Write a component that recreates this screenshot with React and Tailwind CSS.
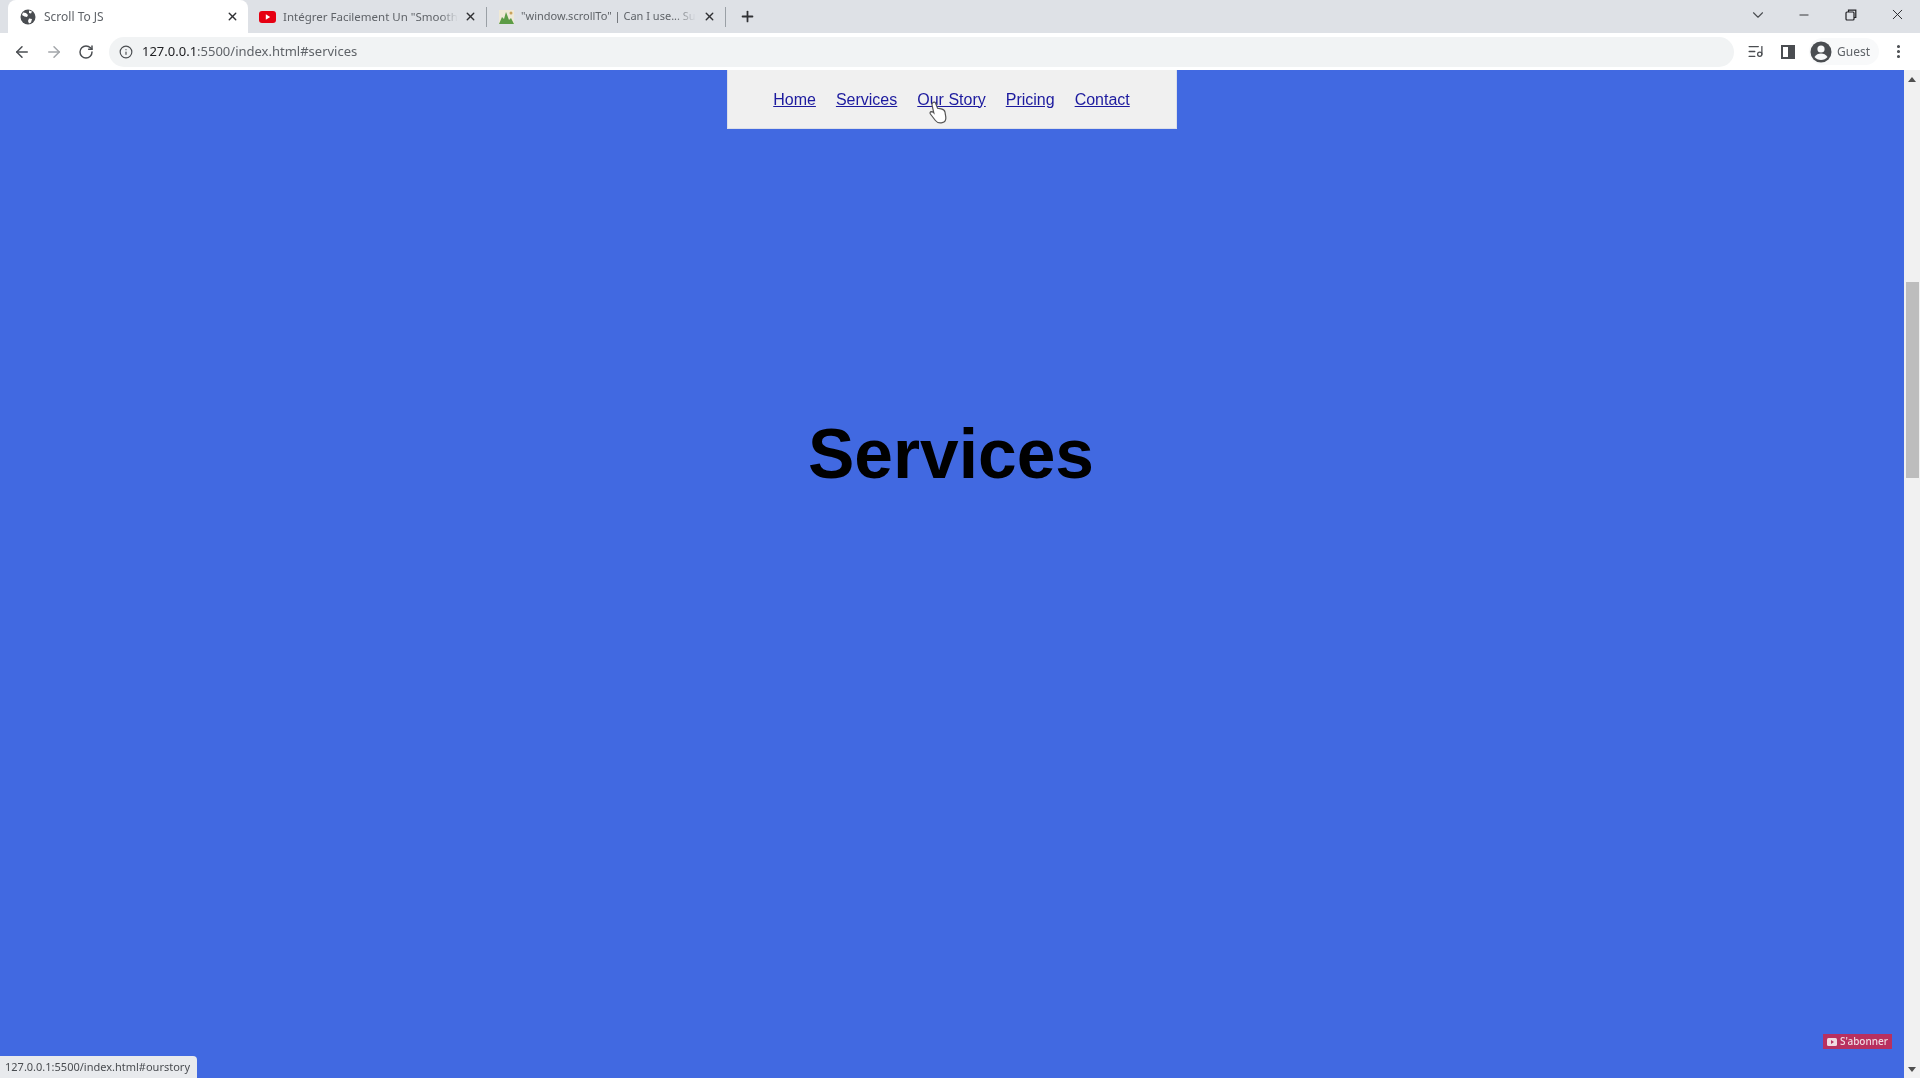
import { ArrowLeft, ArrowRight, RotateCw, Info, X, Plus, ChevronDown, Minus, EllipsisVertical, ListMusic } from "lucide-react";

const links = ["Home", "Services", "Our Story", "Pricing", "Contact"];

const GlobeIcon = () => (
  <svg width="16" height="16" viewBox="0 0 16 16" className="shrink-0">
    <circle cx="8" cy="8" r="7.5" fill="#4a4d51" />
    <path d="M3 3.5l3 .5 2 2-1 2-2.5-.5L2 6zM9 9.5l3 .5-1 3.5-2 1-1-2.5zM9 1.5l3 1-1 2-2-.5z" fill="#fff" />
  </svg>
);

const YoutubeIcon = () => (
  <svg width="17" height="12" viewBox="0 0 17 12" className="shrink-0">
    <rect width="17" height="12" rx="3" fill="#e60012" />
    <path d="M6.8 3.2l4.4 2.8-4.4 2.8z" fill="#fff" />
  </svg>
);

const CaniuseIcon = () => (
  <svg width="17" height="16" viewBox="0 0 17 16" className="shrink-0">
    <rect x="1" y="1" width="15" height="14" fill="#efe9d6" />
    <path d="M1 15l3-7 2 2 2-7 3 8 2-2 3 6z" fill="#5c9c46" />
    <circle cx="13" cy="4" r="1.5" fill="#c9a25b" />
  </svg>
);

const Tab = ({ icon, title, active, width, textClass }) => (
  <div
    className={
      active
        ? "flex h-[33px] items-center rounded-t-lg bg-white pl-3 pr-[9px]"
        : "flex h-[33px] items-center pl-[11px] pr-[9px]"
    }
    style={{ width }}
  >
    {icon}
    <span className={textClass}>{title}</span>
    <X size={13} strokeWidth={2.5} className="ml-auto shrink-0 text-[#303134]" />
  </div>
);

export default function App() {
  return (
    <div className="flex h-screen w-full flex-col overflow-hidden bg-white font-['Noto_Sans',sans-serif] blur-[0.4px]">
      {/* tab strip */}
      <div className="flex h-[33px] items-center bg-[#dee1e6] pl-2">
        <Tab
          active
          width={240}
          title="Scroll To JS"
          icon={<GlobeIcon />}
          textClass="ml-2 whitespace-nowrap text-xs text-[#5f6368]"
        />
        <Tab
          width={238}
          title={'Intégrer Facilement Un "Smooth'}
          icon={<YoutubeIcon />}
          textClass="ml-[7px] whitespace-nowrap text-[11.5px] text-[#5f6368] [mask-image:linear-gradient(to_right,black_90%,transparent)]"
        />
        <div className="h-5 w-px bg-[#9aa0a6]" />
        <Tab
          width={238}
          title={'"window.scrollTo" | Can I use... Su'}
          icon={<CaniuseIcon />}
          textClass="ml-[6px] whitespace-nowrap text-[11px] text-[#5f6368] [mask-image:linear-gradient(to_right,black_88%,transparent)]"
        />
        <div className="h-5 w-px bg-[#9aa0a6]" />
        <Plus size={17} strokeWidth={2.5} className="ml-[13px] text-[#303134]" />
        <div className="flex-1" />
        <div className="flex items-center pb-1">
          <ChevronDown size={18} strokeWidth={1.5} className="text-[#4a4d51]" />
          <Minus size={14} strokeWidth={1.5} className="ml-[30px] text-[#202124]" />
          <svg width="12" height="12" viewBox="0 0 12 12" className="ml-[34px]" fill="none" stroke="#202124" strokeWidth="1.2">
            <rect x="1" y="3" width="8" height="8" rx="1" />
            <path d="M3.5 3V1.2h7.3v7.3H9" />
          </svg>
          <X size={17} strokeWidth={1.3} className="ml-[32px] mr-[14px] text-[#202124]" />
        </div>
      </div>

      {/* toolbar */}
      <div className="flex h-[37px] items-center bg-white">
        <ArrowLeft size={18} strokeWidth={2} className="ml-[13px] text-[#4a4d51]" />
        <ArrowRight size={18} strokeWidth={2} className="ml-[14px] text-[#a3a6aa]" />
        <RotateCw size={16} strokeWidth={2.2} className="ml-[15px] text-[#4a4d51]" />
        <div className="ml-[15px] flex h-[30px] flex-1 items-center rounded-full bg-[#f1f3f4] pl-[10px]">
          <Info size={14} strokeWidth={2} className="text-[#4a4d51]" />
          <span className="ml-[9px] text-[13px] text-[#202124]">
            127.0.0.1<span className="text-[#5f6368]">:5500/index.html#services</span>
          </span>
        </div>
        <ListMusic size={17} strokeWidth={1.8} className="ml-[13px] text-[#4a4d51]" />
        <svg width="14" height="14" viewBox="0 0 14 14" className="ml-[17px]">
          <path fillRule="evenodd" d="M0 0h14v14H0zM2 2v10h5V2z" fill="#4a4d51" />
        </svg>
        <div className="ml-[14px] flex h-[27px] w-[70px] items-center rounded-full bg-[#f8f9fa] pl-[1px]">
          <svg width="22" height="22" viewBox="0 0 22 22" className="shrink-0">
            <circle cx="11" cy="11" r="10.5" fill="#4a4d51" />
            <circle cx="11" cy="8" r="3.6" fill="#f8f9fa" />
            <path d="M4.5 16c1.5-2.6 4-3.6 6.5-3.6s5 1 6.5 3.6c-1.6 2-3.9 3-6.5 3s-4.9-1-6.5-3z" fill="#f8f9fa" />
          </svg>
          <span className="ml-[5px] text-xs text-[#5f6368]">Guest</span>
        </div>
        <EllipsisVertical size={17} strokeWidth={2.4} className="ml-[11px] mr-[13px] text-[#4a4d51]" />
      </div>

      {/* page */}
      <div className="flex flex-1">
        <div className="relative flex flex-1 flex-col items-center bg-[#4169e1] font-['Liberation_Sans',sans-serif]">
          <nav className="flex h-[59px] w-[450px] items-center justify-center gap-5 border border-t-0 border-[#dcdfe8] bg-[#f0f0f0] pt-[1px] pr-[1px]">
            {links.map((link) => (
              <a key={link} href="#" className="text-base text-[#1c1a9e] underline">
                {link}
              </a>
            ))}
          </nav>
          <h1 className="mt-[285px] mr-[2px] text-[69.5px] leading-[80px] font-bold text-black">Services</h1>

          {/* mouse cursor */}
          <svg width="20" height="25" viewBox="0 0 20 25" className="absolute left-[928px] top-[30px]">
            <path
              d="M5 2.5c1-.8 2.2-.3 2.6.8l2 5 3.6.6c2 .4 3.4 1.4 3.8 3.2l.8 5c.3 2.6-1 5-3.6 5.6-2.8.7-5.2-.2-6.8-2.2L2.4 14c-.8-1-.3-2.2 1-2.3.8 0 1.6.4 2.4 1.2L4 4.8c-.2-1 .2-1.8 1-2.3z"
              fill="#fff"
              stroke="#555"
              strokeWidth="1.2"
            />
          </svg>

          {/* link preview bubble */}
          <div className="absolute bottom-0 left-0 flex h-[22px] w-[197px] items-center rounded-tr bg-[#e8eaed] pl-[5px] font-['Noto_Sans',sans-serif] text-[11px] text-[#4a4d51]">
            127.0.0.1:5500/index.html#ourstory
          </div>

          {/* subscribe watermark */}
          <div className="absolute bottom-[29px] right-[12px] flex h-[15px] w-[69px] items-center justify-center gap-[3px] bg-[#b8305f] font-['Noto_Sans',sans-serif] text-[10px] font-medium text-[#f0dbe2]">
            <svg width="10" height="8" viewBox="0 0 10 8">
              <rect width="10" height="8" rx="1.5" fill="#f0dbe2" />
              <path d="M4 2l3 2-3 2z" fill="#b8305f" />
            </svg>
            S'abonner
          </div>
        </div>

        {/* scrollbar */}
        <div className="flex w-4 flex-col items-center bg-[#f1f1f1]">
          <div className="mt-[7px] h-0 w-0 border-x-4 border-b-[5px] border-x-transparent border-b-[#505050]" />
          <div className="mt-[200px] h-[196px] w-[13px] bg-[#bdbdbd]" />
          <div className="flex-1" />
          <div className="mb-[6px] h-0 w-0 border-x-4 border-t-[5px] border-x-transparent border-t-[#505050]" />
        </div>
      </div>
      <div className="h-[2px] bg-white" />
    </div>
  );
}
